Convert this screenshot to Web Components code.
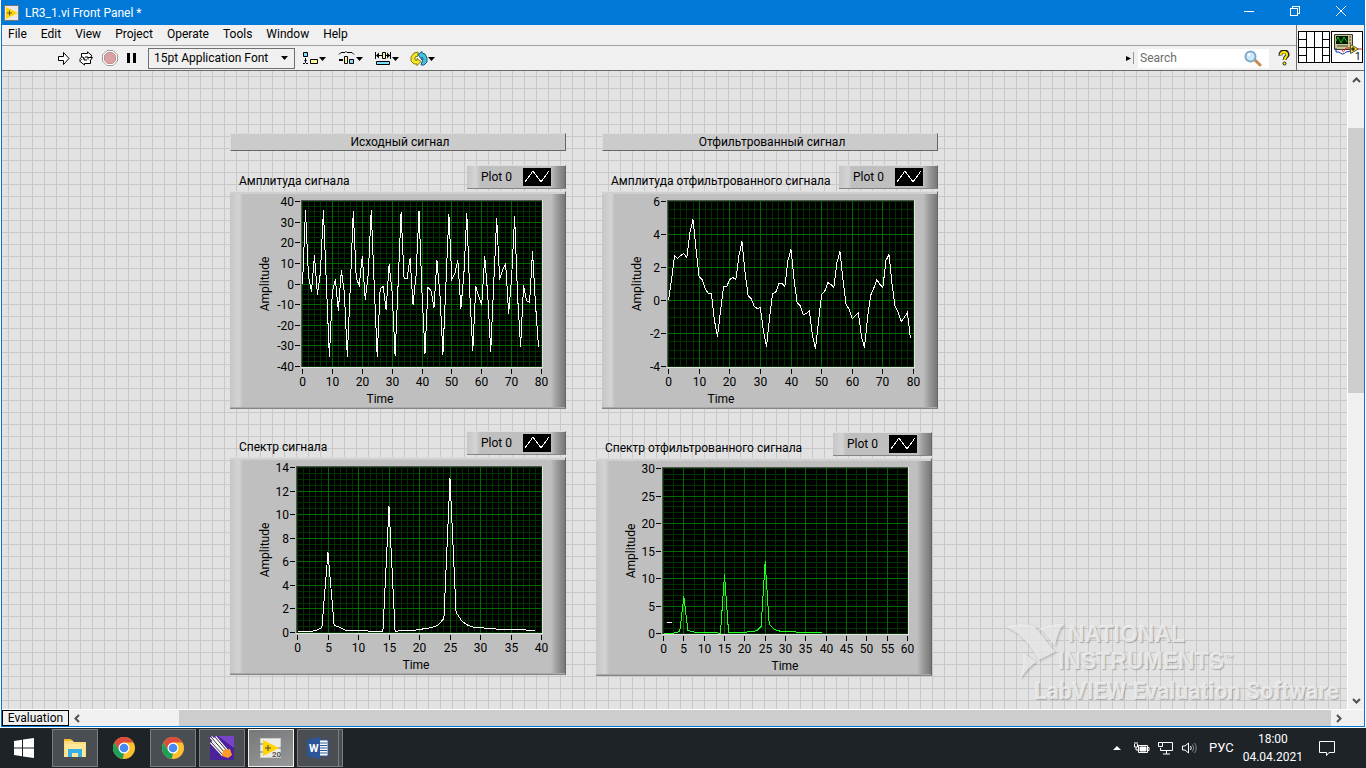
<!DOCTYPE html>
<html lang="ru">
<head>
<meta charset="utf-8">
<title>LR3_1.vi Front Panel</title>
<style>
  html, body { height: 100%; }
  body {
    margin: 0;
    display: flex;
    flex-direction: column;
    overflow: hidden;
    background: #fff;
    color: #000;
    font: 12px/16px Roboto, "Open Sans", sans-serif;
  }
  vi-window { flex: 1; min-height: 0; }
  vi-label, vi-graph { position: absolute; }
</style>
</head>
<body>
<vi-window>
  <title-bar slot="head">LR3_1.vi Front Panel *</title-bar>
  <tool-area slot="head"></tool-area>
  <front-panel>
    <vi-label style="left:228px;top:62px">Исходный сигнал</vi-label>
    <vi-label style="left:600px;top:62px">Отфильтрованный сигнал</vi-label>
    <vi-graph style="left:228px;top:94px" data-plot="signal">Амплитуда сигнала</vi-graph>
    <vi-graph style="left:600px;top:94px" data-plot="filtered">Амплитуда отфильтрованного сигнала</vi-graph>
    <vi-graph style="left:228px;top:360px" data-plot="spectrum">Спектр сигнала</vi-graph>
    <vi-graph style="left:594px;top:361px" data-plot="filteredSpectrum">Спектр отфильтрованного сигнала</vi-graph>
    <ni-watermark slot="mark"></ni-watermark>
  </front-panel>
</vi-window>
<task-bar></task-bar>

<script>
class ViWindow extends HTMLElement {
  constructor() {
    super();
    this.attachShadow({ mode: "open" });
    this.shadowRoot.innerHTML = `
      <style>
        :host {
          display: flex;
          flex-direction: column;
          margin: 0 1px 1px;
          border: 1px solid #0078d7;
          border-top: 0;
          background: #f0f0f0;
        }
        .body { flex: 1; min-height: 0; display: flex; }
        .main { flex: 1; min-width: 0; display: flex; }
        ::slotted(front-panel) { flex: 1; }
        .vbar { width: 17px; display: flex; flex-direction: column; border-left: 1px solid #fff; box-sizing: border-box; }
        .hbar { height: 17px; display: flex; border-top: 1px solid #fff; box-sizing: border-box; }
        button {
          border: 0;
          padding: 0;
          background: none;
          width: 16px;
          height: 17px;
          display: flex;
          align-items: center;
          justify-content: center;
        }
        .hbar button { height: 16px; }
        svg { fill: none; stroke: #505050; stroke-width: 2; }
        .track { flex: 1; display: flex; flex-direction: column; padding-top: 40px; }
        .track div { height: 47%; background: #cdcdcd; }
        .hbar .track { flex-direction: row; padding: 0 0 0 94px; }
        .hbar .track div { width: 100%; height: 100%; }
        .mode {
          border: 1px solid #000;
          min-width: 67px;
          box-sizing: border-box;
          text-align: center;
          padding: 0 4px;
          line-height: 14px;
        }
        .corner { width: 17px; }
      </style>
      <slot name="head"></slot>
      <div class="body">
        <div class="main"><slot></slot></div>
        <div class="vbar">
          <button aria-label="Up"><svg width="9" height="6"><path d="M1 5l3.500-3.500L8 5"/></svg></button>
          <div class="track"><div></div></div>
          <button aria-label="Down"><svg width="9" height="6"><path d="M1 1l3.500 3.500L8 1"/></svg></button>
        </div>
      </div>
      <div class="hbar">
        <div class="mode">Evaluation</div>
        <button aria-label="Left"><svg width="6" height="9"><path d="M5 1L1.500 4.500L5 8"/></svg></button>
        <div class="track"><div></div></div>
        <button aria-label="Right"><svg width="6" height="9"><path d="M1 1l3.500 3.500L1 8"/></svg></button>
        <div class="corner"></div>
      </div>
    `;
  }
}

class TitleBar extends HTMLElement {
  constructor() {
    super();
    this.attachShadow({ mode: "open" });
    this.shadowRoot.innerHTML = `
      <style>
        :host {
          display: flex;
          align-items: center;
          height: 25px;
          background: #0078d7;
          color: #fff;
        }
        .icon { margin: 0 6px 0 2px; }
        span { flex: 1; }
        button { width: 46px; height: 25px; padding: 0; border: 0; background: none; }
        .win { fill: none; stroke: #fff; shape-rendering: crispEdges; }
        .x { shape-rendering: auto; }
      </style>
      <svg class="icon" width="15" height="16">
        <rect x=".5" y=".5" width="14" height="15" fill="#e9e9e9" stroke="#777"/>
        <path d="M2 2l12 6-12 6z" fill="#ffd500"/>
        <path d="M3 8h5M5.500 5.500v5" stroke="#555"/>
      </svg>
      <span><slot></slot></span>
      <button aria-label="Minimize"><svg class="win" width="12" height="12"><path d="M1 6.500h10"/></svg></button>
      <button aria-label="Restore"><svg class="win" width="12" height="12"><path d="M1.500 3.500h7v7h-7zM3.500 3.500v-2h7v7h-2"/></svg></button>
      <button aria-label="Close"><svg class="win x" width="12" height="12"><path d="M1 1l10 10M11 1L1 11"/></svg></button>
    `;
  }
}

class ToolArea extends HTMLElement {
  constructor() {
    super();
    this.attachShadow({ mode: "open" });
    const menu = ["File", "Edit", "View", "Project", "Operate", "Tools", "Window", "Help"];
    this.shadowRoot.innerHTML = `
      <style>
        :host {
          display: flex;
          height: 45px;
          border-bottom: 1px solid #6a6a6a;
          background: #f0f0f0;
        }
        .rows { flex: 1; display: flex; flex-direction: column; }
        nav {
          display: flex;
          gap: 14px;
          height: 21px;
          padding: 0 6px 2px;
          box-sizing: border-box;
          align-items: center;
          border-bottom: 1px solid #a0a0a0;
        }
        button { border: 0; padding: 0; background: none; font: inherit; color: inherit; display: flex; }
        .tools { flex: 1; display: flex; align-items: center; padding: 0 6px 0 55px; }
        .run { display: flex; gap: 8px; align-items: center; margin-right: 11px; }
        .font { display: flex; position: relative; margin-right: 7px; }
        select {
          appearance: none;
          width: 147px;
          height: 21px;
          padding: 0 5px;
          border: 1px solid #707070;
          border-radius: 0;
          background: #f0f0f0;
          font: inherit;
          color: inherit;
        }
        .font svg { position: absolute; right: 7px; top: 8px; }
        .edit { display: flex; gap: 11px; flex: 1; align-items: center; }
        .sep { width: 1px; height: 12px; background: #999; margin: 0 4px 0 2px; }
        .search { display: flex; align-items: center; background: #fff; width: 131px; height: 19px; margin-right: 9px; }
        input {
          flex: 1;
          min-width: 0;
          padding: 0 2px;
          border: 0;
          outline: 0;
          background: none;
          font: inherit;
        }
        input::placeholder { color: #6d6d6d; opacity: 1; }
        .search svg { margin-right: 7px; }
        .pane { display: flex; align-items: flex-end; gap: 0; border-left: 1px solid #707070; padding: 0 0 7px 1px; }
      </style>
      <div class="rows">
        <nav>${menu.map(m => `<button>${m}</button>`).join("")}</nav>
        <div class="tools">
          <div class="run">
            <button aria-label="Run"><svg width="13" height="15"><path d="M1.500 5.500h5v-4l5.500 6-5.500 6v-4h-5z" fill="#fff" stroke="#000"/></svg></button>
            <button aria-label="Run continuously"><svg width="16" height="15" fill="#fff" stroke="#000">
              <path d="M3.500 6V2.500h6V.8l4.500 4-4 3.500V6H7"/><path d="M12.500 8v4.500h-6V14L1.500 10 6 6.500V9h3"/>
              <path d="M10 6.500h4.500L12 10M1.500 8.500L4 5.500l2 2.500"/></svg></button>
            <button aria-label="Abort"><svg width="16" height="16"><path d="M5 .5h6L15.500 5v6L11 15.500H5L.5 11V5z" fill="#fff" stroke="#999"/><path d="M5.500 2.500h5l3 3v5l-3 3h-5l-3-3v-5z" fill="#dba1a1" stroke="#c79090"/></svg></button>
            <button aria-label="Pause"><svg width="11" height="12"><path d="M1 1h3v10H1zM7 1h3v10H7z"/></svg></button>
          </div>
          <div class="font">
            <select aria-label="Font"><option>15pt Application Font</option></select>
            <svg width="7" height="4"><path d="M0 0h7L3.500 4z"/></svg>
          </div>
          <div class="edit">
            <button aria-label="Align"><svg width="25" height="15">
              <path d="M1.500 1.500h4v4h-4z" fill="#7be0ff" stroke="#000"/><path d="M8.500 8.500h7v4h-7z" fill="#fff79a" stroke="#000"/>
              <path d="M1 12.500h6M3.500 7v5" stroke="#000" stroke-dasharray="2 1"/><path d="M2 9h3l-1.500 2zM17 6h7l-3.500 4z"/></svg></button>
            <button aria-label="Distribute"><svg width="25" height="15">
              <path d="M1 3.500l2-2h4l1-1 1 1h5l2 2" fill="none" stroke="#000"/><path d="M6.500 5.500h3v7h-3z" fill="#fff79a" stroke="#000"/>
              <path d="M11.500 8.500h4v4h-4z" fill="#7be0ff" stroke="#000"/><path d="M1 8h4v2H1zM18 6h7l-3.500 4z"/></svg></button>
            <button aria-label="Resize"><svg width="25" height="15">
              <path d="M8.500 1.500h3v6h-3z" fill="#fff79a" stroke="#000"/><path d="M2.500 10.500h13v3h-13z" fill="#7be0ff" stroke="#000"/>
              <path d="M1.500 1v7M16.500 1v7M3 4.500h5M12 4.500h4" stroke="#000"/><path d="M2 4.500l3-3v6zM16 4.500l-3-3v6zM18 6h7l-3.500 4z"/></svg></button>
            <button aria-label="Reorder"><svg width="25" height="15">
              <path d="M8 1L4 2 1 6v4l3 3h3v1.500l4-4-4-3v2L5 9V6l3-1z" fill="#f5e52b" stroke="#8a7a00"/>
              <path d="M8 3.500l4-3V2l3 1 2 4v4l-3 3h-3l1-3 1-3-1-2v3z" fill="#49bfe0" stroke="#155e77"/><path d="M18 6h7l-3.500 4z"/></svg></button>
          </div>
          <svg width="5" height="7"><path d="M0 1l5 2.500L0 6z"/></svg>
          <div class="sep"></div>
          <div class="search">
            <input type="text" placeholder="Search" aria-label="Search">
            <svg width="18" height="17"><path d="M11 10l5 5" stroke="#c98a4a" stroke-width="3" stroke-linecap="round"/><circle cx="6.500" cy="6.500" r="5" fill="#c9ebfb" stroke="#7fa8c9" stroke-width="2"/><path d="M4 5.500l2-2" stroke="#fff" stroke-width="2"/></svg>
          </div>
          <button aria-label="Help"><svg width="12" height="16"><path d="M2.500 5.500C2 0 10 0 9.500 5 9 7 6.500 7 6.500 10" fill="none" stroke="#222" stroke-width="4"/><path d="M2.500 5C3 1 9.500 1 9 5 9 7 6.500 7 6.500 10" fill="none" stroke="#ffea00" stroke-width="2"/><circle cx="6.500" cy="13.500" r="1.500" fill="#ffea00" stroke="#222"/></svg></button>
        </div>
      </div>
      <div class="pane">
        <svg width="33" height="32" fill="#fff" stroke="#000" shape-rendering="crispEdges">
          <path d="M.5.500h31v31H.5zM8.500 1v30M16.500 1v30M24.500 1v30M1 8.500h7M1 16.500h31M1 24.500h7M25 8.500h7M25 24.500h7"/>
        </svg>
        <svg width="33" height="32">
          <path d="M.5.500h31v31H.5z" fill="#fff" stroke="#000" shape-rendering="crispEdges"/>
          <path d="M3.500 3.500h18v15h-18z" fill="#c9c58c" stroke="#333"/><path d="M5 5h12v8H5z" fill="#001800"/>
          <path d="M5 10l2-4 3 6 3-6 3 5" fill="none" stroke="#19c219"/><path d="M18 6h2M18 9h2M18 12h2M6 15h11" stroke="#444"/>
          <path d="M5 17v4h3q4 4 7 0l5-1" fill="none" stroke="#1133bb"/><path d="M11 18q1 6 4-1h5M26 18h5" fill="none" stroke="#e02020"/>
          <path d="M19.500 13.500l8 4.500-8 4.500z" fill="#f4e11e" stroke="#555"/><path d="M20 18h4M22 16v4" stroke="#000"/>
          <text x="24" y="29" font-size="10">1</text>
        </svg>
      </div>
    `;
  }
}

class FrontPanel extends HTMLElement {
  constructor() {
    super();
    this.attachShadow({ mode: "open" });
    this.shadowRoot.innerHTML = `
      <style>
        :host {
          display: block;
          position: relative;
          overflow: hidden;
          background-color: #e2e2e2;
          background-image:
            linear-gradient(#c8c8c8 1px, transparent 1px),
            linear-gradient(90deg, #c8c8c8 1px, transparent 1px);
          background-size: 12px 12px;
          background-position: 6px 5px;
        }
        ::slotted(ni-watermark) { position: absolute; right: 8px; bottom: 4px; }
      </style>
      <slot></slot>
      <slot name="mark"></slot>
    `;
  }
}

class ViLabel extends HTMLElement {
  constructor() {
    super();
    this.attachShadow({ mode: "open" });
    this.shadowRoot.innerHTML = `
      <style>
        :host {
          width: 336px;
          padding-left: 4px;
          box-sizing: border-box;
          border: 1px solid #dcdcdc;
          border-right-color: #666;
          border-bottom-color: #666;
          background: #cbcbcb;
          text-align: center;
        }
      </style>
      <slot></slot>
    `;
  }
}

const spectrum = [.05, .05, .05, .15, .4, 6.8, .6, .4, .2, .15, .15, .15, .1, .1, .05, 10.7, .1, .15, .15, .2,
  .25, .3, .4, .6, 1.2, 13.1, 1.7, .9, .6, .45, .4, .35, .3, .25, .25, .25, .25, .25, .2, .2];

const plots = {
  signal: {
    left: 71, timeX: 149, x: [0, 80, 10, 2], y: [-40, 40, 10, 2.5], color: "#fff",
    data: [0, 35.5, 3.5, -3.5, 14, -5, 5.5, 35.5, 0, -35, -3.5, 2, -13, 6.5, -4, -35, -1, 35, 2.5, -.5,
      13.5, -7.5, 4.5, 35.5, 0, -35, -2, -1, -12.5, 9.5, -4, -34.5, 0, 34.5, 2.5, 2.5, 12.5, -10, 4, 35,
      -4, -33.5, -1.5, -3, -11.5, 11.5, -5, -34, 0, 33.5, 2, 5, 11.5, -12, 4, 34, -5, -32, -1, -6,
      -10, 13.5, -5, -32.5, 0, 32, 2, 7, 10, -14.5, 3, 32.5, -6, -30.5, -.5, -8, -9, 16, -10, -31]
  },
  filtered: {
    left: 65, timeX: 118, x: [0, 80, 10, 2], y: [-4, 6, 2, .5], color: "#fff",
    data: [0, 1.3, 2.7, 2.55, 2.7, 2.85, 2.6, 4.1, 4.9, 3.1, 1.45, 1.25, .75, .45, .4, -1.2, -2.2, -.6, .85, .85,
      1.25, 1.4, 1.25, 2.7, 3.55, 1.7, .3, .15, -.35, -.5, -.4, -1.9, -2.8, -1, .4, .5, 1.05, 1.05, .85, 2.4,
      3.1, 1.3, -.1, -.3, -.85, -.8, -.6, -2.1, -2.9, -1.2, .35, .55, 1.1, 1, .8, 2.3, 2.95, 1.2, -.25, -.55,
      -1.1, -.9, -.7, -2.2, -2.85, -1, .3, .75, 1.25, 1, .8, 2.4, 2.8, 1, -.35, -.7, -1.3, -1, -.75, -2.3]
  },
  spectrum: { left: 66, timeX: 185, x: [0, 40, 5, 1], y: [0, 14, 2, .5], color: "#fff", data: spectrum },
  filteredSpectrum: {
    left: 66, timeX: 188, x: [0, 60, 5, 2.5], y: [0, 30, 5, 1], color: "#1eff1e", data: spectrum,
    extra: `<path d="M70 163.500h5" stroke="#fff"/>`
  }
};

// graph indicator: caption, legend and a plot with two scales
class ViGraph extends HTMLElement {
  constructor() {
    super();
    this.attachShadow({ mode: "open" });
  }
  getStyles() {
    return `
      <style>
        :host { display: block; width: 336px; }
        header { display: flex; justify-content: space-between; align-items: flex-start; height: 26px; }
        .caption { padding: 8px 0 0 9px; white-space: nowrap; }
        .legend, .frame {
          border-top: 1px solid #dedede;
          border-bottom: 1px solid #858585;
          border-right: 1px solid #666;
          box-sizing: border-box;
          background: linear-gradient(90deg, #c6c6c6, #d4d4d4 9px, #bfbfbf 13px, #bfbfbf calc(100% - 14px), #9c9c9c calc(100% - 8px), #777);
        }
        .legend {
          display: flex;
          align-items: center;
          justify-content: flex-end;
          gap: 11px;
          width: 99px;
          height: 24px;
          padding-right: 14px;
        }
        .frame { height: 218px; padding-left: 1px; box-shadow: inset 0 -1px #aaa, inset 0 2px #d0d0d0; }
        svg { display: block; }
        .frame text { font-size: 12px; }
      </style>
    `;
  }
  getPlot(p) {
    const top = 9, bottom = 174, right = 310;
    const sx = v => p.left + (v - p.x[0]) / (p.x[1] - p.x[0]) * (right - p.left);
    const sy = v => bottom - (v - p.y[0]) / (p.y[1] - p.y[0]) * (bottom - top);
    const snap = v => Math.round(v) + .5;
    let minor = "", major = "", ticks = "", labels = "";
    for (let v = p.x[0]; v <= p.x[1]; v += p.x[3]) minor += `M${snap(sx(v))} ${top}V${bottom + 1}`;
    for (let v = p.y[0]; v <= p.y[1]; v += p.y[3]) minor += `M${p.left} ${snap(sy(v))}H${right + 1}`;
    for (let v = p.x[0]; v <= p.x[1]; v += p.x[2]) {
      const x = snap(sx(v));
      if (v > p.x[0] && v < p.x[1]) major += `M${x} ${top}V${bottom + 1}`;
      ticks += `M${x} ${bottom + 3}v5`;
      labels += `<text x="${x}" y="194" text-anchor="middle">${v}</text>`;
    }
    for (let v = p.y[0]; v <= p.y[1]; v += p.y[2]) {
      const y = snap(sy(v));
      if (v > p.y[0] && v < p.y[1]) major += `M${p.left} ${y}H${right + 1}`;
      ticks += `M${p.left - 7} ${y}h5`;
      labels += `<text x="${p.left - 8}" y="${Math.floor(y) + 5}" text-anchor="end">${v}</text>`;
    }
    const line = p.data.map((v, i) => `${sx(i) + .5},${snap(sy(v))}`).join(" ");
    return `
      <svg width="334" height="216">
        <g fill="none" shape-rendering="crispEdges">
          <path d="M${p.left - 1} ${top - 1}H${right + 2}V${bottom + 2}H${p.left - 1}z" fill="#e2e2e2"/>
          <path d="M${p.left - 1} ${top - 1}H${right + 1}V${bottom + 1}H${p.left - 1}z" fill="#555"/>
          <path d="M${p.left} ${top}H${right + 1}V${bottom + 1}H${p.left}z" fill="#000"/>
          <path d="${minor}" stroke="#003200"/>
          <path d="${major}" stroke="#006c00"/>
          <polyline points="${line}" stroke="${p.color}"/>
          ${p.extra || ""}
          <path d="${ticks}" stroke="#000"/>
        </g>
        ${labels}
        <text x="${p.timeX}" y="211" text-anchor="middle">Time</text>
        <text transform="translate(38 92) rotate(-90)" text-anchor="middle">Amplitude</text>
      </svg>
    `;
  }
  connectedCallback() {
    this.shadowRoot.innerHTML = `
      ${this.getStyles()}
      <header>
        <div class="caption"><slot></slot></div>
        <div class="legend">
          <span>Plot 0</span>
          <svg width="28" height="18" shape-rendering="crispEdges"><path d="M0 0h28v18H0z"/><path d="M2 14L10 3l8 11 8-11" fill="none" stroke="#fff"/></svg>
        </div>
      </header>
      <div class="frame">${this.getPlot(plots[this.dataset.plot])}</div>
    `;
  }
}

class NiWatermark extends HTMLElement {
  constructor() {
    super();
    this.attachShadow({ mode: "open" });
    this.shadowRoot.innerHTML = `
      <style>
        :host {
          display: block;
          color: rgba(244, 244, 244, .8);
          text-shadow: 1px 1px 1px rgba(0, 0, 0, .25);
          white-space: nowrap;
        }
        .brand { display: flex; font: bold 23px/27px "Liberation Sans", sans-serif; }
        .brand span { display: block; padding-left: 10px; }
        .brand span + span { padding: 0; }
        svg { margin-right: -8px; filter: drop-shadow(1px 1px 1px rgba(0, 0, 0, .3)); }
        .product { font: bold 23px/26px Roboto, "Liberation Sans", sans-serif; padding-left: 28px; }
        sup { font-size: 10px; line-height: 10px; vertical-align: 8px; }
      </style>
      <div class="brand">
        <svg width="60" height="58" fill="#f4f4f4" fill-opacity=".75">
          <path d="M0 6Q14 1 28 5L49 31L33 39Q20 14 0 6z"/><path d="M33 8q10-5 25-5-6 6-9 22L41 15q-3-5-8-7z"/><path d="M17 32l13 9q-9 7-16 17 4-12 3-26z"/>
        </svg>
        <div><span>NATIONAL</span><span>INSTRUMENTS<sup>™</sup></span></div>
      </div>
      <div class="product">LabVIEW<sup>™</sup>Evaluation Software</div>
    `;
  }
}

class TaskBar extends HTMLElement {
  constructor() {
    super();
    this.attachShadow({ mode: "open" });
    const chrome = `<svg width="24" height="24">
      <circle cx="12" cy="12" r="11" fill="#fbc02d"/><path d="M2.500 6.500A11 11 0 0 1 21.500 6.500H12L7.500 15z" fill="#de4a3c"/>
      <path d="M2.500 6.500L7.300 14.700 12 17l-1.200 6A11 11 0 0 1 2.500 6.500z" fill="#1da05a"/><circle cx="12" cy="12" r="5.500" fill="#fff"/><circle cx="12" cy="12" r="4.300" fill="#4688f4"/></svg>`;
    this.shadowRoot.innerHTML = `
      <style>
        :host {
          display: flex;
          align-items: center;
          height: 40px;
          background: #1e2328;
          color: #fff;
        }
        button {
          width: 46px;
          height: 38px;
          margin-right: 3px;
          padding: 0;
          box-sizing: border-box;
          border: 1px solid transparent;
          background: none;
          display: flex;
          align-items: center;
          justify-content: center;
          color: inherit;
          font: inherit;
        }
        .start { width: 48px; margin-right: 4px; }
        .open { background: #4a4e52; border-color: #7b7e81; }
        .active { background: linear-gradient(160deg, #757779, #97999b); border-color: #f0f0f0; }
        .word { width: 42px; margin: 0; }
        .stack { width: 4px; height: 38px; box-sizing: border-box; border: 1px solid #7b7e81; border-left: 0; background: #4a4e52; }
        .tray { margin-left: auto; display: flex; align-items: center; gap: 7px; padding-right: 23px; }
        .tray button { width: auto; height: auto; margin: 0; border: 0; }
        .tray .lang { margin: 0 -2px 0 4px; font-size: 13px; }
        .clock { text-align: center; line-height: 18px; margin: 0 8px 0 4px; }
        .tray svg { fill: none; stroke: #fff; }
      </style>
      <button class="start" aria-label="Start"><svg width="20" height="20" fill="#fff"><path d="M0 3l8-1.200v7.700H0zM9 1.600L20 0v9.500H9zM0 10.500h8v7.700L0 17zM9 10.500h11V20L9 18.400z"/></svg></button>
      <button class="open" aria-label="Explorer"><svg width="24" height="20"><path d="M1 2h8l2 2h12v15H1z" fill="#fbdc7e"/><path d="M1 1h7l1 2H1z" fill="#f7b928"/><path d="M2 6h20v13H2z" fill="#ffe799"/><path d="M5 19v-8h14v8h-4v-4H9v4z" fill="#35b1e8"/></svg></button>
      <button aria-label="Chrome">${chrome}</button>
      <button class="open" aria-label="Chrome window">${chrome}</button>
      <button class="open" aria-label="Editor"><svg width="24" height="24"><path d="M0 0h24v24H0z" fill="#4b219c"/><path d="M8 0h16v12z" fill="#7744c8"/>
        <path d="M1 1l13 15M5 1l12 14M1 6l12 13" stroke="#fff" stroke-width="3"/><path d="M1 1l13 15M5 1l12 14M1 6l12 13" stroke="#333"/>
        <path d="M13 14l7-1 2 6-4 3-6-2z" fill="#ff9a28"/></svg></button>
      <button class="open active" aria-label="LabVIEW"><svg width="22" height="22"><path d="M.5 1.500h20v19H.5z" fill="#ecebe6" stroke="#ccc"/><path d="M0 7h3M0 15h3M18 11h4" stroke="#777"/><path d="M3 3l16 8-16 8z" fill="#ffd500"/><path d="M5 11h6M8 8v6" stroke="#444"/><text x="12" y="20" font-size="8" font-weight="bold" fill="#555">20</text></svg></button>
      <button class="open word" aria-label="Word"><svg width="22" height="22"><path d="M11 3h10v16H11z" fill="#fff" stroke="#2b579a"/><path d="M13 6h7M13 8.500h7M13 11h7M13 13.500h7M13 16h7" stroke="#2b579a"/><path d="M0 2.500L13 0v22L0 19.500z" fill="#2b579a"/><text x="2" y="15" font-size="11" font-weight="bold" fill="#fff">W</text></svg></button>
      <div class="stack"></div>
      <div class="tray">
        <button aria-label="Hidden icons"><svg width="17" height="8"><path d="M4 6l4-4 4 4z" fill="#fff" stroke="none"/></svg></button>
        <svg width="17" height="14"><path d="M5.500 4.500h9v7h-9zM15 6.500h1v3h-1M1.500 3v3h3V3M2 1v2M4 1v2M3 6v3h2"/><path d="M7 6h6v4H7z" fill="#fff"/></svg>
        <svg width="17" height="14"><path d="M5.500 1.500h10v8H3.500V7M9.500 10v3M6 13h7M1.500 1.500h4v4h-4z"/></svg>
        <svg width="17" height="14"><path d="M1.500 5v4H4l3.500 3V2L4 5zM9.500 5q1.500 2 0 4"/><path d="M11.500 3.500q2.500 3.500 0 7M13.500 2q3.500 5 0 10" stroke="#888"/></svg>
        <button class="lang" aria-label="Language">РУС</button>
        <div class="clock">18:00<br>04.04.2021</div>
        <button aria-label="Notifications"><svg width="18" height="18"><path d="M1.500 2.500h15v11H11l-2.500 3V13.500h-7z"/></svg></button>
        <span></span>
      </div>
    `;
  }
}

customElements.define("vi-window", ViWindow);
customElements.define("title-bar", TitleBar);
customElements.define("tool-area", ToolArea);
customElements.define("front-panel", FrontPanel);
customElements.define("vi-label", ViLabel);
customElements.define("vi-graph", ViGraph);
customElements.define("ni-watermark", NiWatermark);
customElements.define("task-bar", TaskBar);
</script>
</body>
</html>
